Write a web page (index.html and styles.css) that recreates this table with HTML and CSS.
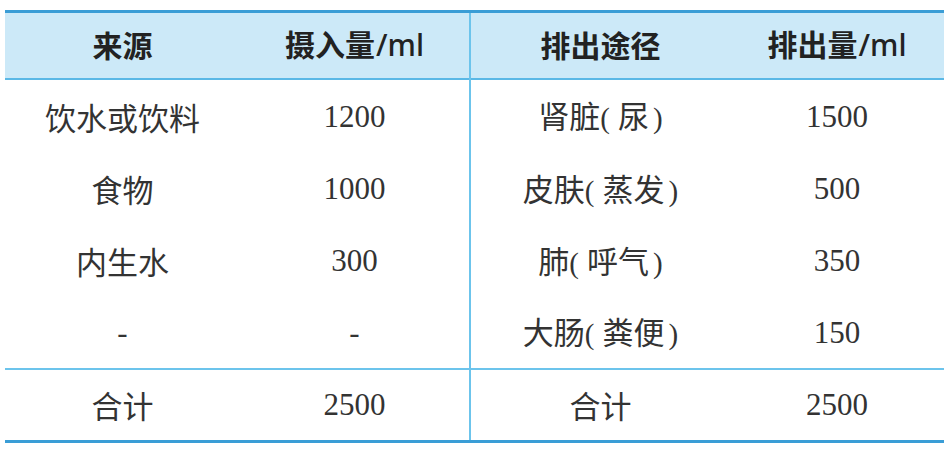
FILE: index.html
```html
<!DOCTYPE html>
<html lang="zh">
<head>
<meta charset="utf-8">
<link rel="stylesheet" href="styles.css">
</head>
<body>
<table class="water">
  <colgroup>
    <col class="c1"><col class="c2"><col class="c3"><col class="c4">
  </colgroup>
  <thead>
    <tr>
      <th>来源</th>
      <th class="split">摄入量<span class="unit">/ml</span></th>
      <th>排出途径</th>
      <th>排出量<span class="unit">/ml</span></th>
    </tr>
  </thead>
  <tbody>
    <tr>
      <td>饮水或饮料</td>
      <td class="num split">1200</td>
      <td>肾脏<span class="p l">(</span>尿<span class="p r">)</span></td>
      <td class="num">1500</td>
    </tr>
    <tr>
      <td>食物</td>
      <td class="num split">1000</td>
      <td>皮肤<span class="p l">(</span>蒸发<span class="p r">)</span></td>
      <td class="num">500</td>
    </tr>
    <tr>
      <td>内生水</td>
      <td class="num split">300</td>
      <td>肺<span class="p l">(</span>呼气<span class="p r">)</span></td>
      <td class="num">350</td>
    </tr>
    <tr>
      <td class="num">-</td>
      <td class="num split">-</td>
      <td>大肠<span class="p l">(</span>粪便<span class="p r">)</span></td>
      <td class="num">150</td>
    </tr>
  </tbody>
  <tfoot>
    <tr>
      <td>合计</td>
      <td class="num split">2500</td>
      <td>合计</td>
      <td class="num">2500</td>
    </tr>
  </tfoot>
</table>
</body>
</html>
```

FILE: styles.css
```css
html, body {
  margin: 0;
  padding: 0;
  background: #ffffff;
}

body {
  padding: 10px 0 0 5px;
}

.water {
  border-collapse: collapse;
  table-layout: fixed;
  width: 939px;
  font-family: "Noto Sans CJK SC", sans-serif;
  color: #2a2a2a;
}

.c1 { width: 235px; }
.c2 { width: 230px; }
.c3 { width: 260px; }
.c4 { width: 214px; }

.water th,
.water td {
  padding: 0;
  text-align: center;
  vertical-align: middle;
}

.water thead tr {
  background: #cce9f8;
  border-top: 3px solid #3a9dd6;
  border-bottom: 2px solid #5ab8e6;
  height: 67px;
}

.water th {
  font-size: 30px;
  font-weight: 700;
  color: #222;
  line-height: 1;
  padding-bottom: 3px;
}

.water th .unit {
  font-family: "Noto Sans", sans-serif;
  font-weight: 500;
  font-size: 30px;
  margin-left: 1px;
}

.water tbody tr {
  height: 72px;
}

.water tbody tr:first-child { height: 74px; }

.water td {
  font-size: 31px;
  line-height: 1;
  font-weight: 400;
  color: #333;
}

.water td.num {
  font-family: "Liberation Serif", serif;
  font-size: 31px;
}

.water .split {
  border-right: 2px solid #6cc4ec;
}

.water tfoot tr {
  border-top: 2px solid #6cc4ec;
  border-bottom: 3px solid #3a9dd6;
  height: 73px;
}

.p {
  font-family: "Liberation Serif", serif;
  font-size: 29px;
}
.p.l { margin-right: 8px; }
.p.r { margin-left: 4px; }
```
